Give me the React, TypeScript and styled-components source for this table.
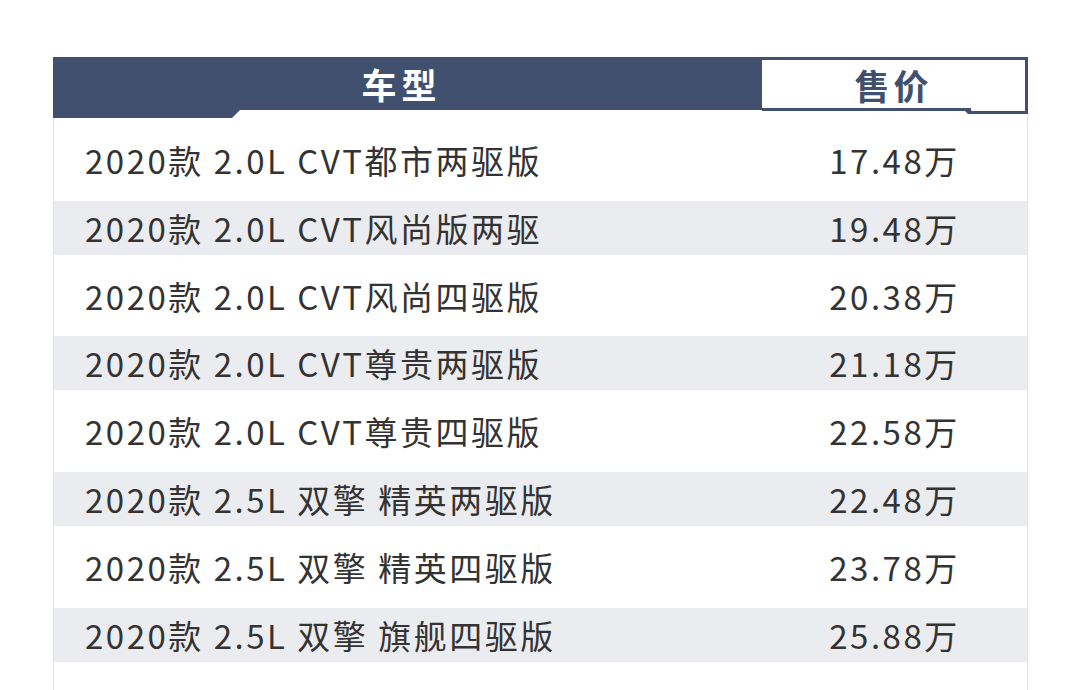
import React from 'react';
import styled, { createGlobalStyle } from 'styled-components';

const GlobalStyle = createGlobalStyle`
  html, body {
    margin: 0;
    padding: 0;
    background: #ffffff;
    font-family: "Noto Sans CJK SC", "Noto Sans", sans-serif;
  }
`;

const NAVY = '#42506f';

const Page = styled.div`
  width: 1080px;
  height: 690px;
  overflow: hidden;
  padding: 57px 0 0 53px;
  box-sizing: border-box;
`;

const Table = styled.div`
  width: 975px;
  display: flex;
  flex-direction: column;
`;

const Header = styled.div`
  display: flex;
  height: 53px;
  position: relative;
  z-index: 1;
`;

const ModelHead = styled.div`
  flex: 1;
  background: ${NAVY};
  color: #ffffff;
  display: flex;
  align-items: center;
  justify-content: center;
  padding-right: 12px;
  font-size: 35px;
  font-weight: 700;
  letter-spacing: 5px;
  position: relative;

  /* small tab hanging under the left end */
  &::after {
    content: '';
    position: absolute;
    left: 0;
    top: 100%;
    width: 187px;
    height: 8px;
    background: ${NAVY};
    clip-path: polygon(0 0, 100% 0, calc(100% - 8px) 100%, 0 100%);
  }
`;

const PriceHead = styled.div`
  width: 266px;
  box-sizing: border-box;
  height: 54px;
  background: #ffffff;
  border: 3px solid ${NAVY};
  border-left: none;
  color: ${NAVY};
  display: flex;
  align-items: center;
  justify-content: center;
  font-size: 35px;
  font-weight: 700;
  letter-spacing: 4px;
  position: relative;

  /* bottom border steps down near the right corner */
  &::before {
    content: '';
    position: absolute;
    right: 0;
    bottom: -3px;
    width: 54px;
    height: 3px;
    background: #ffffff;
  }
  &::after {
    content: '';
    position: absolute;
    right: -3px;
    bottom: -6px;
    width: 63px;
    height: 6px;
    background: ${NAVY};
    clip-path: polygon(0 0, 4px 0, 7px 3px, 100% 3px, 100% 100%, 3px 100%, 0 3px);
  }
`;

const Body = styled.div`
  display: flex;
  flex-direction: column;
  gap: 13.8px;
  padding: 23px 0 40px;
  border-left: 1px solid #e4e4e8;
  border-right: 1px solid #e4e4e8;
  background: #ffffff;
`;

const Row = styled.div<{ $striped: boolean }>`
  display: flex;
  align-items: center;
  height: 54px;
  background: ${(p) => (p.$striped ? '#ebecf0' : '#ffffff')};
  color: #333333;
  font-size: 33px;
  letter-spacing: 2.5px;
`;

const ModelCell = styled.div`
  flex: 1;
  padding-left: 31px;
  white-space: nowrap;
`;

const PriceCell = styled.div`
  width: 265px;
  text-align: center;
`;

const rows = [
  ['2020款 2.0L CVT都市两驱版', '17.48万'],
  ['2020款 2.0L CVT风尚版两驱', '19.48万'],
  ['2020款 2.0L CVT风尚四驱版', '20.38万'],
  ['2020款 2.0L CVT尊贵两驱版', '21.18万'],
  ['2020款 2.0L CVT尊贵四驱版', '22.58万'],
  ['2020款 2.5L 双擎 精英两驱版', '22.48万'],
  ['2020款 2.5L 双擎 精英四驱版', '23.78万'],
  ['2020款 2.5L 双擎 旗舰四驱版', '25.88万'],
];

export default function App() {
  return (
    <Page>
      <GlobalStyle />
      <Table>
        <Header>
          <ModelHead>车型</ModelHead>
          <PriceHead>售价</PriceHead>
        </Header>
        <Body>
          {rows.map(([model, price], i) => (
            <Row key={model} $striped={i % 2 === 1}>
              <ModelCell>{model}</ModelCell>
              <PriceCell>{price}</PriceCell>
            </Row>
          ))}
        </Body>
      </Table>
    </Page>
  );
}
